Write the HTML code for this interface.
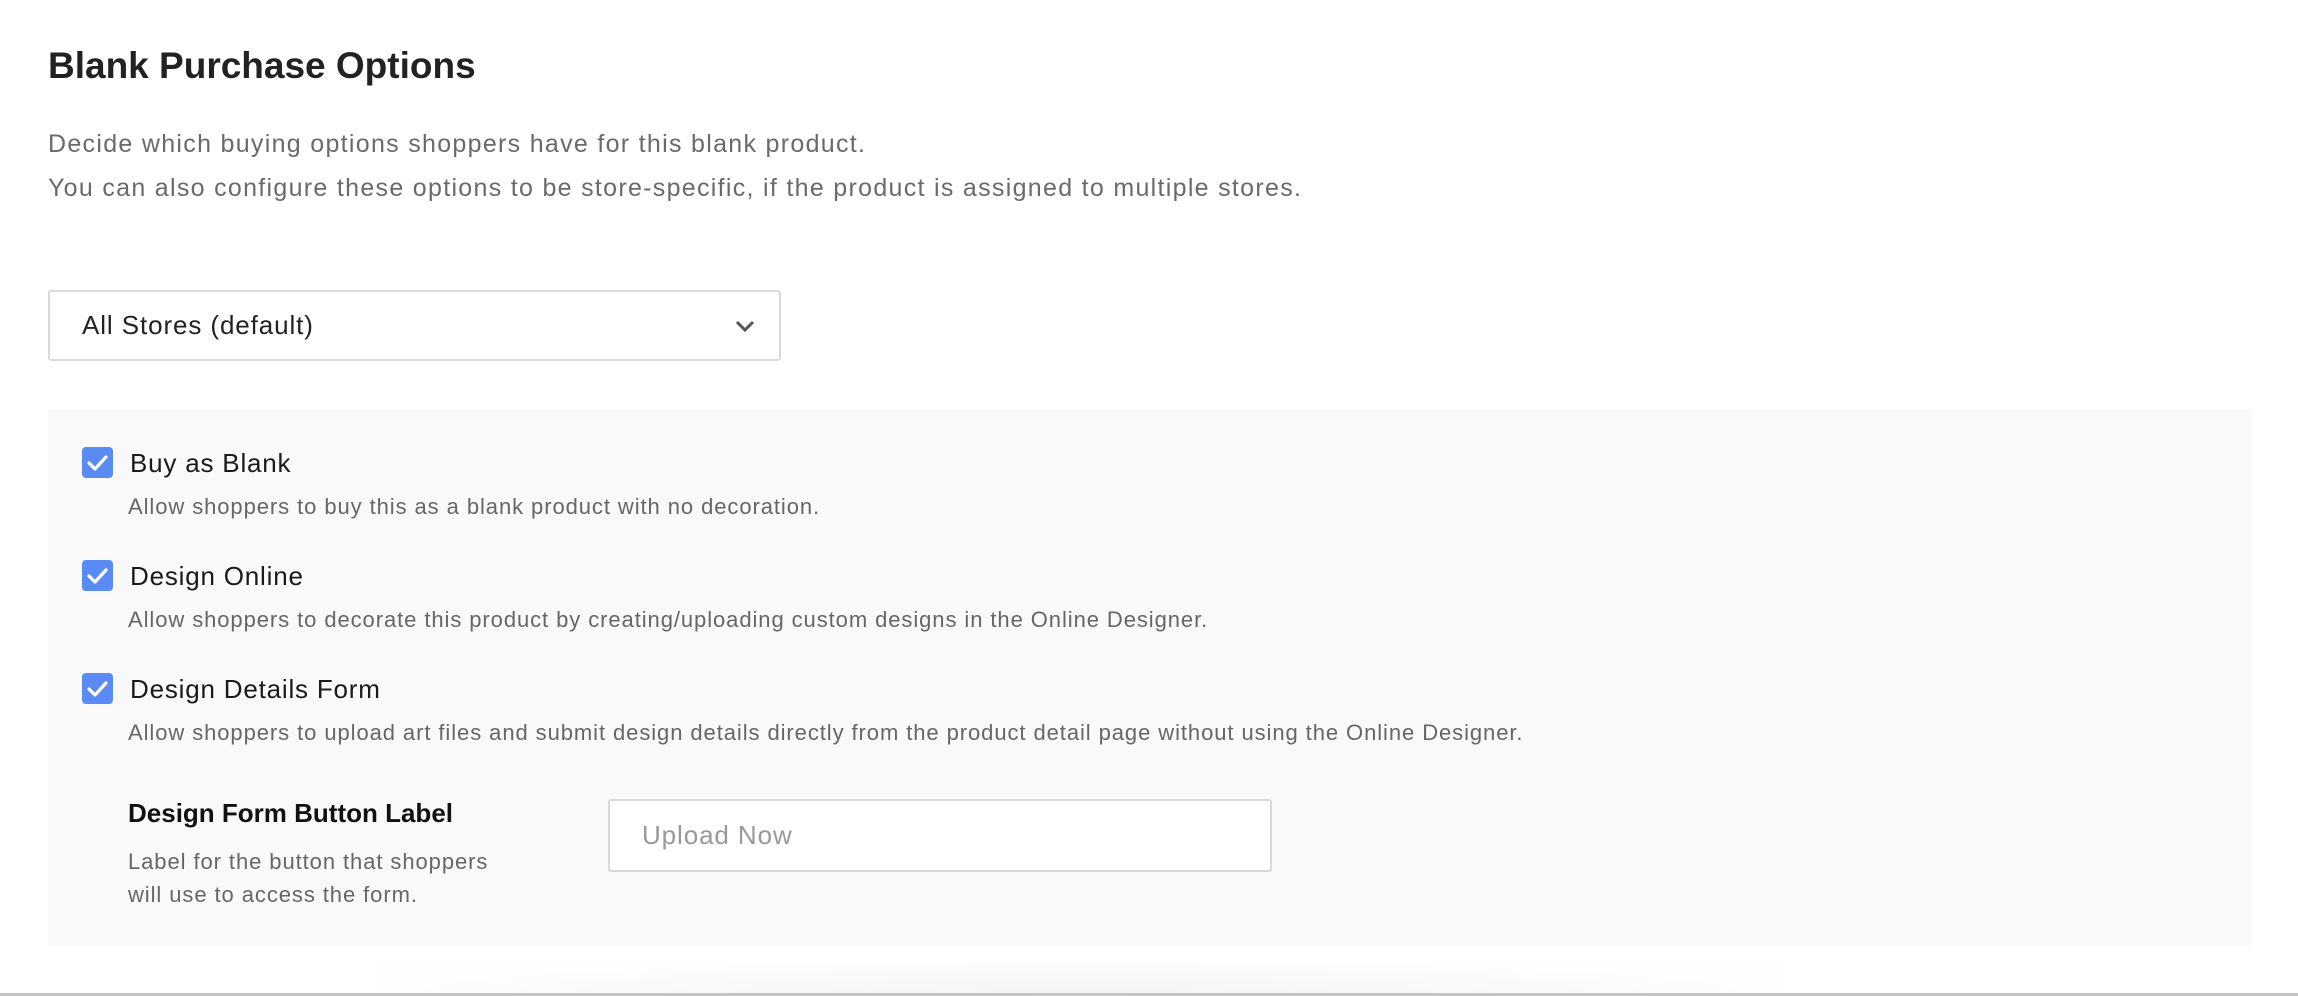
<!DOCTYPE html>
<html><head><meta charset="utf-8"><style>
*{margin:0;padding:0;box-sizing:border-box}
body{width:2298px;height:996px;background:#fff;font-family:"Liberation Sans",sans-serif;position:relative;overflow:hidden}
.a{position:absolute;white-space:nowrap}
h1{position:absolute;left:48px;top:44px;font-size:37px;font-weight:bold;color:#222;line-height:44px}
.d{color:#6a6a6a;font-size:25px;line-height:30px;letter-spacing:1.3px}
.sel{position:absolute;left:48px;top:290px;width:733px;height:71px;border:2px solid #dadada;border-radius:3px;background:#fff}
.panel{position:absolute;left:48px;top:410px;width:2203px;height:536px;background:#f9f9f9}
.cb{position:absolute;left:82px;width:31px;height:31px;border-radius:4px;background:#5a8af3}
.lbl{font-size:26px;color:#1a1a1a;line-height:30px;letter-spacing:0.8px}
.sd{font-size:22px;color:#666;line-height:30px;letter-spacing:0.92px}
.inp{position:absolute;left:608px;top:799px;width:664px;height:73px;border:2px solid #d8d8d8;border-radius:3px;background:#fff}
.bot{position:absolute;left:0;top:993px;width:2298px;height:3px;background:#c4c4c4}
.sh{position:absolute;left:380px;top:960px;width:1400px;height:33px;background:radial-gradient(ellipse at 50% 100%,#f4f4f4,#fdfdfd 70%)}
</style></head><body>
<h1>Blank Purchase Options</h1>
<div class="a d" style="left:48px;top:129px">Decide which buying options shoppers have for this blank product.</div>
<div class="a d" style="left:48px;top:173px">You can also configure these options to be store-specific, if the product is assigned to multiple stores.</div>
<div class="sel"></div>
<div class="a" style="left:82px;top:309px;font-size:26px;color:#222;line-height:32px;letter-spacing:0.9px">All Stores (default)</div>
<svg class="a" style="left:734px;top:318px" width="22" height="16" viewBox="0 0 22 16"><path d="M3 4 L11 12 L19 4" fill="none" stroke="#555" stroke-width="3"/></svg>
<div class="panel"></div>
<div class="cb" style="top:447px"></div>
<svg class="a" style="left:82px;top:447px" width="31" height="31" viewBox="0 0 31 31"><path d="M7 16 L13 22 L24 10" fill="none" stroke="#fff" stroke-width="3.2" stroke-linecap="round" stroke-linejoin="round"/></svg>
<div class="a lbl" style="left:130px;top:448px">Buy as Blank</div>
<div class="a sd" style="left:128px;top:492px">Allow shoppers to buy this as a blank product with no decoration.</div>
<div class="cb" style="top:560px"></div>
<svg class="a" style="left:82px;top:560px" width="31" height="31" viewBox="0 0 31 31"><path d="M7 16 L13 22 L24 10" fill="none" stroke="#fff" stroke-width="3.2" stroke-linecap="round" stroke-linejoin="round"/></svg>
<div class="a lbl" style="left:130px;top:561px">Design Online</div>
<div class="a sd" style="left:128px;top:605px">Allow shoppers to decorate this product by creating/uploading custom designs in the Online Designer.</div>
<div class="cb" style="top:673px"></div>
<svg class="a" style="left:82px;top:673px" width="31" height="31" viewBox="0 0 31 31"><path d="M7 16 L13 22 L24 10" fill="none" stroke="#fff" stroke-width="3.2" stroke-linecap="round" stroke-linejoin="round"/></svg>
<div class="a lbl" style="left:130px;top:674px">Design Details Form</div>
<div class="a sd" style="left:128px;top:718px">Allow shoppers to upload art files and submit design details directly from the product detail page without using the Online Designer.</div>
<div class="a lbl" style="left:128px;top:798px;font-weight:bold;color:#111;letter-spacing:0">Design Form Button Label</div>
<div class="a sd" style="left:128px;top:847px">Label for the button that shoppers</div>
<div class="a sd" style="left:128px;top:880px">will use to access the form.</div>
<div class="inp"></div>
<div class="a" style="left:642px;top:819px;font-size:26px;color:#999;line-height:32px;letter-spacing:0.9px">Upload Now</div>
<div class="sh"></div>
<div class="bot"></div>
</body></html>
